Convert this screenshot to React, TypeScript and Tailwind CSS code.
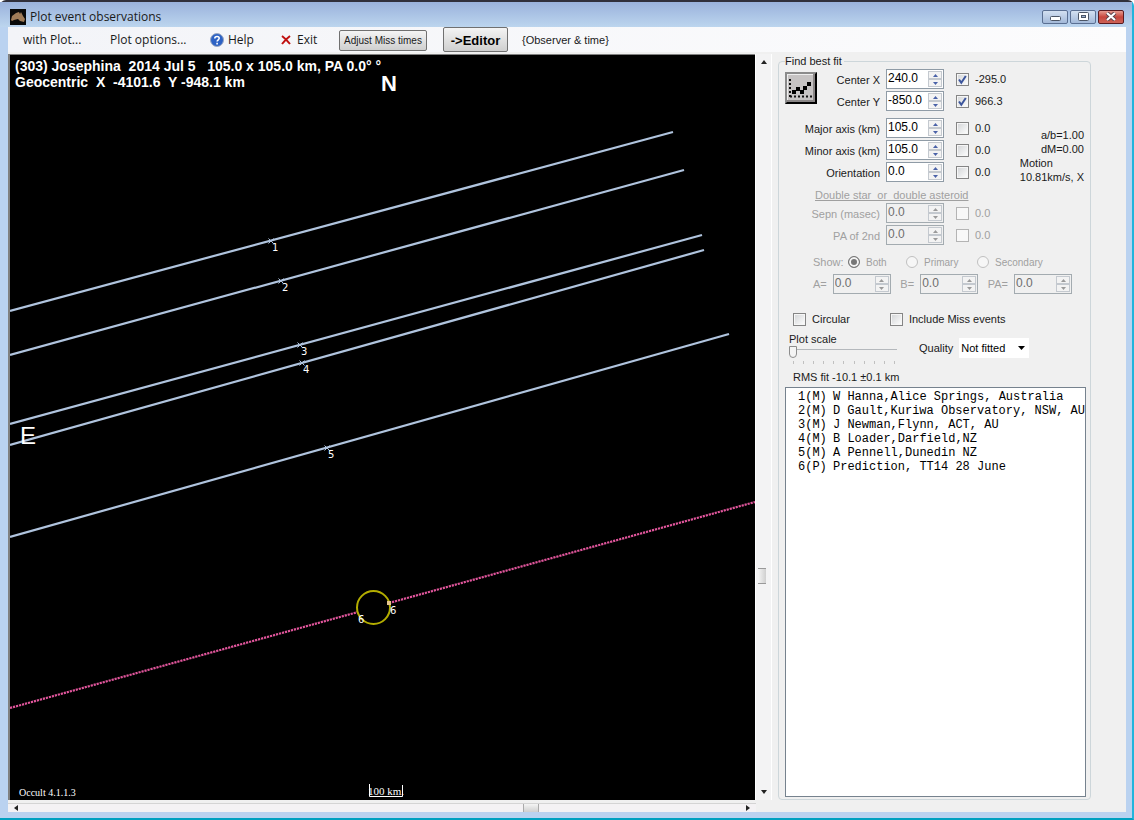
import React, { useId } from "react";

function Spinner({ id, value, label, disabled = false }: { id?: string; value: string; label: string; disabled?: boolean }) {
  const arrow = disabled ? "#9a9a9a" : "#4a62a8";
  return (
    <span className={`flex h-5 w-[58px] shrink-0 border p-px ${disabled ? "border-[#a3abb0] bg-[#f0f0f0]" : "border-[#8f9ba6] bg-white"}`}>
      <input
        id={id}
        type="text"
        defaultValue={value}
        disabled={disabled}
        aria-label={id ? undefined : label}
        className={`w-0 min-w-0 flex-1 bg-transparent pb-0.5 text-xs leading-3 outline-none ${disabled ? "text-[#6d6d6d]" : "text-black"}`}
      />
      <span className="flex w-3.5 flex-col">
        {["up", "down"].map((dir) => (
          <button
            key={dir}
            type="button"
            disabled={disabled}
            aria-label={`${label} ${dir}`}
            className="flex h-2 w-full items-center justify-center border border-[#c4c9cf] bg-[#f3f3f3]"
          >
            <svg width="5" height="3" viewBox="0 0 5 3">
              <path d={dir === "up" ? "M0 3L2.5 0L5 3Z" : "M0 0H5L2.5 3Z"} fill={arrow} />
            </svg>
          </button>
        ))}
      </span>
    </span>
  );
}

function Check({ checked = false, disabled = false, children }: { checked?: boolean; disabled?: boolean; children: React.ReactNode }) {
  return (
    <label className={`flex items-center gap-1.5 whitespace-nowrap ${disabled ? "text-[#a0a0a0]" : ""}`}>
      <span className="relative flex">
        <input
          type="checkbox"
          defaultChecked={checked}
          disabled={disabled}
          className={`peer size-[13px] appearance-none border ${disabled ? "border-[#b4b4b4] bg-[#f8f8f8]" : "border-[#858585] bg-linear-to-br from-[#d2d4d6] to-white shadow-[inset_0_0_0_1px_#f6f6f6]"}`}
        />
        <svg className="pointer-events-none absolute inset-0 hidden peer-checked:block" width="13" height="13" viewBox="0 0 13 13">
          <path d="M3 6.5L5.3 9.7L9.8 3" fill="none" stroke="#3c559c" strokeWidth="2" />
        </svg>
      </span>
      {children}
    </label>
  );
}

function FitRow({ label, value, fit, checked, disabled, labelWidth = "w-[95px]" }: {
  label: string; value: string; fit: string; checked?: boolean; disabled?: boolean; labelWidth?: string;
}) {
  const id = useId();
  return (
    <div className="flex h-[22px] items-center">
      <label htmlFor={id} className={`${labelWidth} shrink-0 pt-0.5 text-right ${disabled ? "text-[#a0a0a0]" : ""}`}>{label}</label>
      <span className="mr-3 ml-1.5 flex">
        <Spinner id={id} value={value} label={label} disabled={disabled} />
      </span>
      <Check checked={checked} disabled={disabled}>{fit}</Check>
    </div>
  );
}

const chords = [
  { n: 1, y0: 311, x1: 673, y1: 132, mx: 271, my: 241 },
  { n: 2, y0: 355, x1: 684, y1: 170, mx: 281, my: 281 },
  { n: 3, y0: 424, x1: 702, y1: 235, mx: 300, my: 345 },
  { n: 4, y0: 445, x1: 704, y1: 250, mx: 302, my: 363 },
  { n: 5, y0: 537, x1: 729, y1: 334, mx: 327, my: 448 },
];

function Plot() {
  return (
    <svg className="block aspect-square w-full bg-black" viewBox="10 55 745 745" fontFamily="'Liberation Sans', Arial, sans-serif" fill="#fff">
      {chords.map((c) => (
        <g key={c.n}>
          <line x1="10" y1={c.y0} x2={c.x1} y2={c.y1} stroke="#b0c4de" strokeWidth="2.2" />
          <path d={`M${c.mx - 2.5} ${c.my - 2.5}l5 5m0-5l-5 5`} stroke="#b0c4de" strokeWidth="1" />
          <text x={c.mx + 1} y={c.my + 10} fontFamily="'DejaVu Sans', sans-serif" fontSize="10">{c.n}</text>
        </g>
      ))}
      <g stroke="#e0559b" strokeWidth="2.2" strokeDasharray="2.2 0.9">
        <line x1="10" y1="708" x2="358" y2="612" />
        <line x1="389" y1="603" x2="755" y2="502" />
      </g>
      <circle cx="373.5" cy="607.5" r="16.5" fill="none" stroke="#b3ad00" strokeWidth="2" />
      <rect x="387" y="601" width="4" height="4" fill="#e6c58c" />
      <g fontFamily="'DejaVu Sans', sans-serif" fontSize="10">
        <text x="358" y="623">6</text>
        <text x="390" y="614">6</text>
      </g>
      <g fontSize="14" fontWeight="bold">
        <text x="15" y="71" xmlSpace="preserve">{"(303) Josephina  2014 Jul 5   105.0 x 105.0 km, PA 0.0° °"}</text>
        <text x="15" y="87" xmlSpace="preserve">{"Geocentric  X  -4101.6  Y -948.1 km"}</text>
      </g>
      <text x="381" y="91" fontSize="22" fontWeight="bold">N</text>
      <text x="20" y="444" fontSize="24">E</text>
      <g fontFamily="'Liberation Serif', serif">
        <text x="19" y="796" fontSize="10">Occult 4.1.1.3</text>
        <text x="368" y="795" fontSize="11">100 km.</text>
      </g>
      <path d="M369.500 784V796.500H402.500V785" fill="none" stroke="#fff" />
    </svg>
  );
}

function ScrollArrow({ d, label }: { d: string; label: string }) {
  return (
    <button type="button" aria-label={label} className="flex size-3 items-center justify-center">
      <svg width="6" height="6" viewBox="0 0 6 6"><path d={d} fill="#222" /></svg>
    </button>
  );
}

const observers = [
  ["1(M)", "W Hanna,Alice Springs, Australia"],
  ["2(M)", "D Gault,Kuriwa Observatory, NSW, AU"],
  ["3(M)", "J Newman,Flynn, ACT, AU"],
  ["4(M)", "B Loader,Darfield,NZ"],
  ["5(M)", "A Pennell,Dunedin NZ"],
  ["6(P)", "Prediction, TT14 28 June"],
];

function FitPanel() {
  return (
    <fieldset className="flex min-w-0 flex-1 flex-col rounded-sm border border-[#cdd6da] pr-1 pb-0.5 pl-1.5">
      <legend className="pr-0.5 leading-[14px]">Find best fit</legend>

      <div className="flex">
        <button type="button" aria-label="Find best fit" className="mt-1 size-8 shrink-0 border-2 border-t-[#8b8b8b] border-r-black border-b-black border-l-[#8b8b8b] bg-[#c6c3c3] shadow-[inset_-2px_-2px_0_#8a8686,inset_1px_1px_0_#eee]">
          <svg className="block" width="28" height="28" viewBox="0 0 28 28">
            <path d="M3 5V24M3 22.500H25" stroke="#111" strokeWidth="2" strokeDasharray="2 2" fill="none" />
            <path d="M5 16h4v4H5zM9 13h4v4H9zM13 16h4v4h-4zM16 12h4v4h-4zM20 8h4v4h-4z" fill="#000" />
          </svg>
        </button>
        <div>
          <FitRow label="Center X" value="240.0" fit="-295.0" checked labelWidth="w-[63px]" />
          <FitRow label="Center Y" value="-850.0" fit="966.3" checked labelWidth="w-[63px]" />
        </div>
      </div>

      <div className="mt-[5px] flex justify-between">
        <div>
          <FitRow label="Major axis (km)" value="105.0" fit="0.0" />
          <FitRow label="Minor axis (km)" value="105.0" fit="0.0" />
          <FitRow label="Orientation" value="0.0" fit="0.0" />
        </div>
        <div className="pt-[11px] pr-0.5 text-[11px] leading-[14px] whitespace-nowrap">
          <p className="text-right">a/b=1.00</p>
          <p className="text-right">dM=0.00</p>
          <p>Motion</p>
          <p>10.81km/s, X</p>
        </div>
      </div>

      <div className="mt-1 text-[#a0a0a0]">
        <p className="pl-[30px] leading-[14px] whitespace-pre underline">Double star  or  double asteroid</p>
        <FitRow label="Sepn (masec)" value="0.0" fit="0.0" disabled />
        <FitRow label="PA of 2nd" value="0.0" fit="0.0" disabled />
        <div className="mt-1 flex h-6 items-center pl-7">
          <span className="w-[35px]">Show:</span>
          {[["Both", "w-[58px]"], ["Primary", "w-[71px]"], ["Secondary", "w-20"]].map(([name, width], i) => (
            <label key={name} className={`flex items-center gap-1.5 text-[10px] ${width}`}>
              <input
                type="radio"
                name="show"
                disabled
                defaultChecked={i === 0}
                className="size-3 shrink-0 appearance-none rounded-full border border-[#c0c0c0] bg-[#f6f6f6] checked:border-[#777] checked:bg-[#777] checked:shadow-[inset_0_0_0_2px_#f4f4f4]"
              />
              {name}
            </label>
          ))}
        </div>
        <div className="flex justify-between pr-3.5 pl-7">
          {["A=", "B=", "PA="].map((name) => (
            <span key={name} className="flex items-center gap-1.5">
              {name}
              <Spinner value="0.0" label={name} disabled />
            </span>
          ))}
        </div>
      </div>

      <div className="mt-[17px] flex h-4 items-center gap-10 pl-2">
        <Check>Circular</Check>
        <Check>Include Miss events</Check>
      </div>

      <div className="mt-[5px] flex">
        <div className="w-[134px] pl-1">
          <label htmlFor="scale" className="block leading-[14px]">Plot scale</label>
          <input
            id="scale"
            type="range"
            min="0"
            max="10"
            defaultValue="0"
            className="block h-3 w-[108px] appearance-none bg-transparent bg-linear-to-b from-[#b4b8bc] to-[#b4b8bc] bg-[length:100%_1px] bg-[position:0_3px] bg-no-repeat [&::-webkit-slider-thumb]:h-3 [&::-webkit-slider-thumb]:w-2 [&::-webkit-slider-thumb]:appearance-none [&::-webkit-slider-thumb]:rounded-b-full [&::-webkit-slider-thumb]:border [&::-webkit-slider-thumb]:border-[#8d8d8d] [&::-webkit-slider-thumb]:bg-[#f4f4f4]"
          />
          <div className="mt-[3px] flex w-[106px] justify-between pl-1">
            {Array.from({ length: 11 }, (_, i) => <span key={i} className="h-[3px] w-px bg-[#c0c0c0]" />)}
          </div>
        </div>
        <label className="flex h-[26px] items-end gap-1.5">
          <span className="h-[18px]">Quality</span>
          <span className="relative flex items-center">
            <select className="h-5 w-[70px] appearance-none bg-white pl-0.5 text-[11px] text-black outline-none">
              <option>Not fitted</option>
            </select>
            <svg className="pointer-events-none absolute right-1" width="7" height="4" viewBox="0 0 7 4"><path d="M0 0H7L3.500 4Z" /></svg>
          </span>
        </label>
      </div>

      <p className="mt-[5px] pl-2 leading-4">RMS fit -10.1 ±0.1 km</p>
      <ul className="mt-0.5 flex-1 border border-[#76828e] bg-white pt-0.5 pl-3 font-['Liberation_Mono','Courier_New',monospace] text-xs leading-[14px] whitespace-nowrap text-black">
        {observers.map(([num, name]) => (
          <li key={num} className="flex"><span className="w-[35px]">{num}</span><span>{name}</span></li>
        ))}
      </ul>
    </fieldset>
  );
}

export default function App() {
  return (
    <div className="flex min-h-screen flex-col rounded-t-md border-t-2 border-r-2 border-b-2 border-t-[#30303c] border-r-[#22b4dc] border-b-[#00a0c0] bg-[#bad2f0] pr-1.5 pb-1.5 pl-2 font-['Liberation_Sans',Arial,sans-serif] text-[11px] text-[#1a1a1a]">
      <header className="-mr-1.5 -ml-2 flex h-[25px] items-center bg-linear-to-b from-[#9ab2dc] to-[#bcd5ee] pr-2 pl-2.5 pt-1">
        <svg width="16" height="16" viewBox="0 0 16 16">
          <rect width="16" height="16" fill="#0a0a0a" />
          <path d="M1 11L2 7L6 4L9 3L10 5L11 3L13 7L15 10L14 13L10 12L8 10L4 11L2 12Z" fill="#a07c58" />
        </svg>
        <h1 className="ml-1 flex-1 font-['Open_Sans',sans-serif] text-xs">Plot event observations</h1>
        <div className="flex gap-0.5">
          <button type="button" aria-label="Minimize" className="flex h-3.5 w-[26px] items-center justify-center rounded-xs border border-[#5a6f92] bg-linear-to-b from-[#d3e0f1] to-[#a3b9d9] pt-1">
            <svg width="11" height="5" viewBox="0 0 11 5"><rect x=".5" y=".5" width="10" height="4" rx="1" fill="#fff" stroke="#4b5566" /></svg>
          </button>
          <button type="button" aria-label="Maximize" className="flex h-3.5 w-[26px] items-center justify-center rounded-xs border border-[#5a6f92] bg-linear-to-b from-[#d3e0f1] to-[#a3b9d9]">
            <svg width="11" height="9" viewBox="0 0 11 9"><rect x=".5" y=".5" width="10" height="8" rx="1" fill="#fff" stroke="#4b5566" /><rect x="3.500" y="3.500" width="4" height="2" fill="#9bb2d2" stroke="#4b5566" /></svg>
          </button>
          <button type="button" aria-label="Close" className="flex h-3.5 w-[26px] items-center justify-center rounded-xs border border-[#5a1a20] bg-linear-to-b from-[#e59a90] via-[#c8453c] to-[#cc6258]">
            <svg width="12" height="9" viewBox="0 0 12 9"><path d="M2 1L10 8M10 1L2 8" stroke="#5b4048" strokeWidth="4" /><path d="M2 1L10 8M10 1L2 8" stroke="#fff" strokeWidth="2.2" /></svg>
          </button>
        </div>
      </header>

      <nav className="flex h-[25px] items-center bg-linear-to-r from-[#f3f4f8] to-[#fcfcfd] pl-[15px] font-['Open_Sans',sans-serif] text-xs whitespace-nowrap">
        <button type="button" className="w-[87px] text-left">with Plot...</button>
        <button type="button" className="w-[100px] text-left">Plot options...</button>
        <button type="button" className="flex w-[71px] items-center gap-1">
          <svg width="14" height="14" viewBox="0 0 14 14">
            <circle cx="7" cy="7" r="6.500" fill="#2d62c4" stroke="#9aa8c2" />
            <path d="M4.800 5.500C4.800 2.800 9.300 2.900 9.200 5.300C9.100 6.800 7.100 6.800 7.100 8.600M7.100 9.800V11.400" fill="none" stroke="#fff" strokeWidth="1.600" />
          </svg>
          Help
        </button>
        <button type="button" className="flex w-[58px] items-center gap-1.5">
          <svg width="10" height="10" viewBox="0 0 10 10"><path d="M1 1Q5 4 9 9M9 1Q5 4 1 9" fill="none" stroke="#c01010" strokeWidth="2" /></svg>
          Exit
        </button>
        <button type="button" className="mt-0.5 mr-4 h-[21px] w-[88px] rounded-xs border border-[#707070] bg-linear-to-b from-[#f4f4f4] to-[#cfcfcf] font-['Liberation_Sans',Arial,sans-serif] text-[10px]">Adjust Miss times</button>
        <button type="button" className="h-[25px] w-[65px] rounded-xs border border-[#707070] bg-linear-to-b from-[#f4f4f4] to-[#cfcfcf] pt-0.5 font-['Liberation_Sans',Arial,sans-serif] text-[13px] font-bold text-black">-&gt;Editor</button>
        <span className="ml-3.5 pt-0.5 font-['Liberation_Sans',Arial,sans-serif] text-[11px]">{"{Observer & time}"}</span>
      </nav>

      <main className="flex flex-1 bg-[#f0f0f0] pt-0.5">
        <div className="flex min-w-0 flex-1 flex-col">
          <div className="flex">
            <div className="min-w-0 flex-1 border-t border-l-2 border-[#808080]"><Plot /></div>
            <div className="flex w-[17px] flex-col items-center justify-between border-x border-white bg-[#f3f3f4] py-0.5">
              <ScrollArrow label="Scroll up" d="M0 5L3 1L6 5Z" />
              <span className="mt-[298px] mr-1 h-4 w-2 border-y border-[#999] bg-linear-to-r from-[#f5f5f5] to-[#cfcfcf]" />
              <ScrollArrow label="Scroll down" d="M0 1H6L3 5Z" />
            </div>
          </div>
          <div className="mt-[3px] mr-4 flex h-[9px] items-center justify-between border-t border-[#d4d4d4] bg-[#f4f2f4] px-0.5">
            <ScrollArrow label="Scroll left" d="M5 0L1 3L5 6Z" />
            <span className="ml-[298px] h-2 w-4 border-x border-[#aaa] bg-linear-to-b from-[#f5f5f5] to-[#cfcfcf]" />
            <ScrollArrow label="Scroll right" d="M1 0L5 3L1 6Z" />
          </div>
        </div>
        <aside className="flex w-[354px] shrink-0 pr-[35px] pb-3 pl-1.5">
          <FitPanel />
        </aside>
      </main>
    </div>
  );
}
